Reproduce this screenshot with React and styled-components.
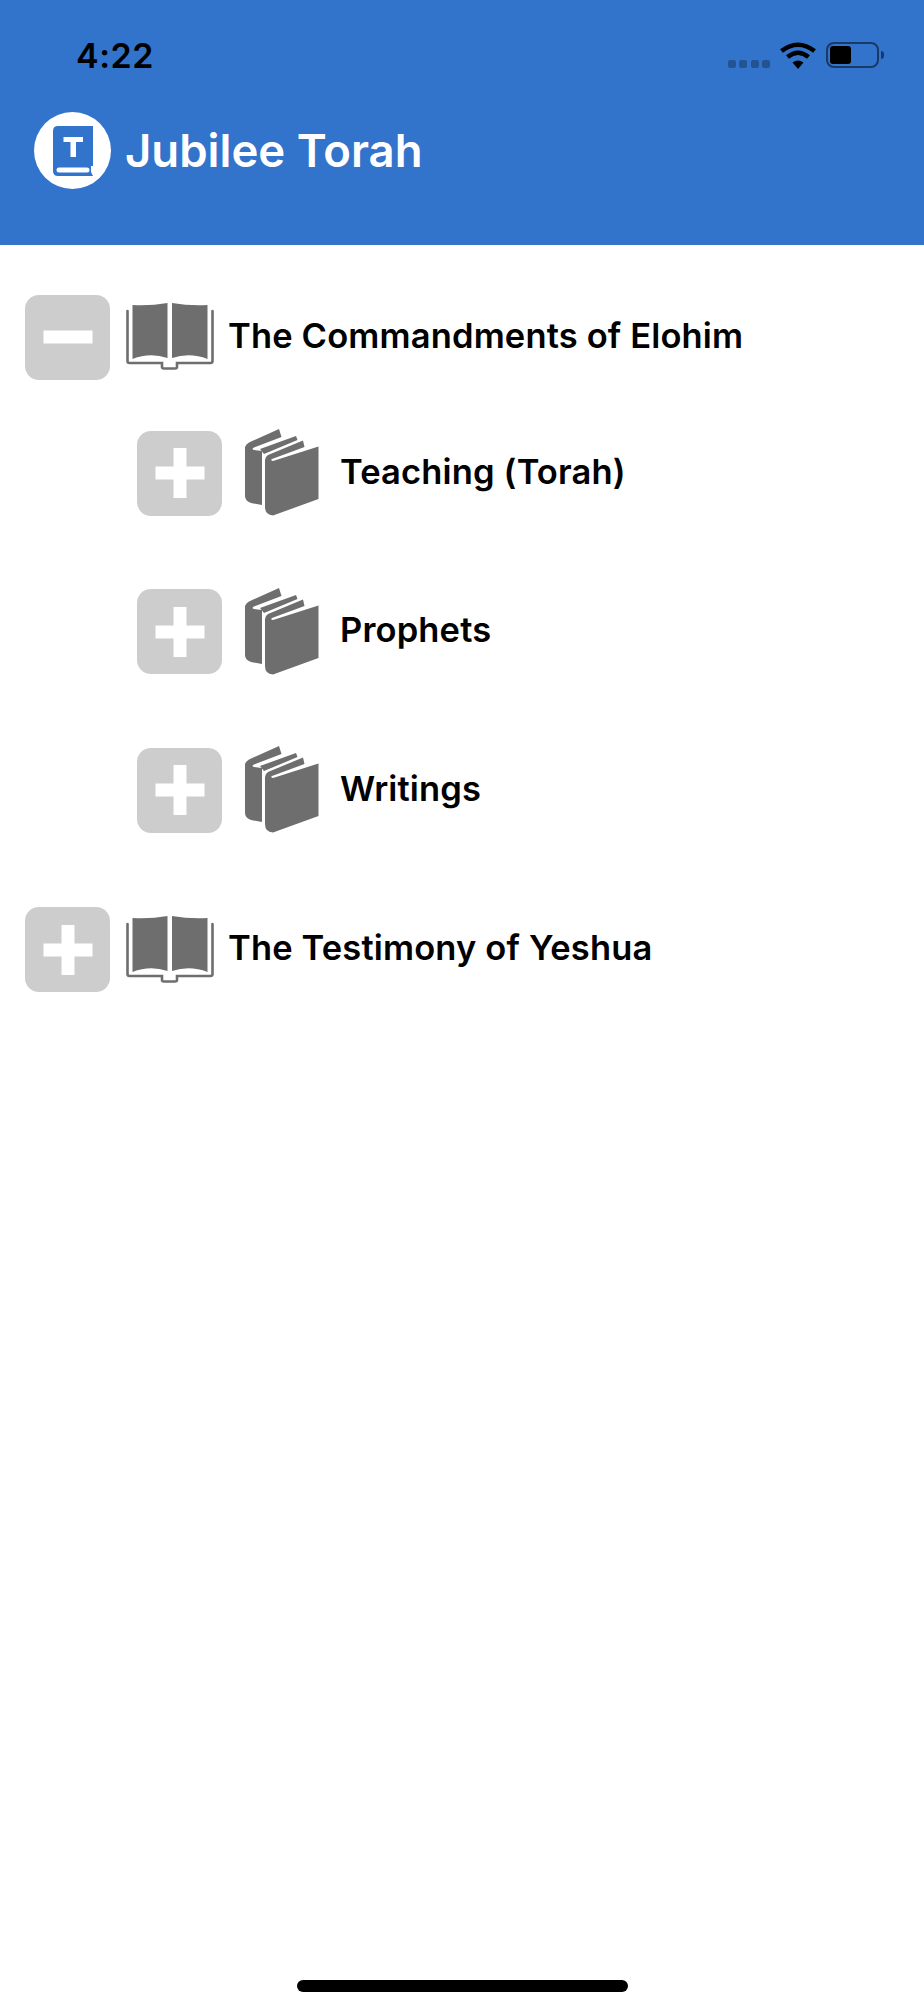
import React from "react";
import styled, { createGlobalStyle } from "styled-components";

const Global = createGlobalStyle`
  html, body { margin: 0; padding: 0; background: #fff; }
  body { font-family: Inter, "Noto Sans", "Liberation Sans", sans-serif; }
`;

const Page = styled.div`
  width: 924px;
  height: 2000px;
  display: flex;
  flex-direction: column;
  background: #fff;
  overflow: hidden;
`;

const Header = styled.header`
  height: 245px;
  flex: none;
  background: #3273cc;
  display: flex;
  flex-direction: column;
  box-sizing: border-box;
`;

const StatusBar = styled.div`
  height: 112px;
  flex: none;
  box-sizing: border-box;
  padding: 37px 40px 0 76px;
  display: flex;
  justify-content: space-between;
  align-items: flex-start;
`;

const Time = styled.div`
  font-size: 34px;
  line-height: 38px;
  font-weight: 600;
  letter-spacing: 0.5px;
  color: #000;
`;

const StatusIcons = styled.div`
  display: flex;
  align-items: flex-start;
  gap: 10px;
  padding-top: 5px;
`;

const Signal = styled.div`
  display: flex;
  gap: 3.5px;
  padding-top: 18px;
`;

const SignalDot = styled.span`
  width: 8px;
  height: 8px;
  border-radius: 2px;
  background: rgba(0, 0, 0, 0.28);
`;

const Battery = styled.div`
  display: flex;
  align-items: center;
  gap: 2px;
`;

const BatteryBody = styled.div`
  width: 53px;
  height: 26px;
  box-sizing: border-box;
  border: 2px solid rgba(0, 0, 0, 0.5);
  border-radius: 8px;
  padding: 2px;
  display: flex;
`;

const BatteryLevel = styled.div`
  width: 21px;
  background: #000;
  border-radius: 3px;
`;

const BatteryNub = styled.div`
  width: 3px;
  height: 8px;
  background: rgba(0, 0, 0, 0.5);
  border-radius: 0 3px 3px 0;
`;

const TitleBar = styled.div`
  display: flex;
  align-items: center;
  gap: 14px;
  padding-left: 34px;
`;

const Logo = styled.div`
  width: 77px;
  height: 77px;
  border-radius: 50%;
  background: #fff;
  display: flex;
  align-items: center;
  justify-content: center;
  flex: none;
`;

const Title = styled.h1`
  margin: 0;
  font-size: 45.5px;
  line-height: 54px;
  font-weight: 600;
  color: #fff;
`;

const Tree = styled.main`
  padding-top: 40px;
  display: flex;
  flex-direction: column;
`;

const TopRow = styled.div`
  height: 104px;
  display: flex;
  align-items: center;
  padding-left: 25px;
  margin-top: ${(p) => (p.$spaced ? "28px" : "0")};
`;

const Children = styled.div`
  margin-top: 5px;
  padding-left: 137px;
  display: flex;
  flex-direction: column;
`;

const ChildRow = styled.div`
  height: 158.5px;
  display: flex;
  align-items: center;
`;

const Toggle = styled.div`
  width: 85px;
  height: 85px;
  flex: none;
  border-radius: 14px;
  background: #cdcdcd;
  display: flex;
  align-items: center;
  justify-content: center;
  margin-right: ${(p) => p.$gap}px;
`;

const Label = styled.span`
  font-size: 34.5px;
  font-weight: 600;
  letter-spacing: 0.15px;
  color: #000;
  margin-left: ${(p) => p.$gap}px;
  padding-bottom: 4px;
  white-space: nowrap;
`;

const HomeBar = styled.div`
  width: 331px;
  height: 12px;
  border-radius: 6px;
  background: #000;
  margin: auto auto 8px 297px;
`;

const Sign = ({ plus }) => (
  <svg width="50" height="50" viewBox="0 0 50 50" aria-hidden="true">
    <rect x="0.5" y="18.5" width="49" height="13" fill="#fff" />
    {plus && <rect x="18.5" y="0" width="13" height="50" fill="#fff" />}
  </svg>
);

const OpenBook = () => (
  <svg width="88" height="70" viewBox="6 8 88 70" aria-hidden="true">
    <path d="M12.5 11 Q30 12 47.5 9 V64 Q30 58 12.5 65 Z" fill="#6e6e6e" />
    <path d="M52 9 Q70 12 87.5 11 V65 Q70 58 52 64 Z" fill="#6e6e6e" />
    <path
      d="M7.5 17 V67 Q7.5 69 9.5 69 H42 V73 Q42 74.5 44 74.5 H55 Q57 74.5 57 73 V69 H90.5 Q92.5 69 92.5 67 V17"
      fill="none"
      stroke="#6e6e6e"
      strokeWidth="2.6"
      strokeLinecap="round"
    />
  </svg>
);

const Books = () => (
  <svg width="77" height="88" viewBox="9 5 77 88" aria-hidden="true">
    <path
      d="M10 23 Q11 20 14 18.5 L44 5 L46.5 13 L19 23.5 Q16 25 19 26 L27 27 V81 L16 79 Q10 77 10 72 Z"
      fill="#6e6e6e"
    />
    <path d="M25 25 L61 12 L62.5 16 L29 30 Z" fill="#6e6e6e" />
    <path
      d="M30 36 Q30 33 33 31 L68 16.5 L69.5 23 L37 35 Q35 36.5 38 37 L83.5 22.5 V75 L38 91.5 Q30 91 30 83 Z"
      fill="#6e6e6e"
    />
  </svg>
);

const LogoMark = () => (
  <svg width="40" height="50" viewBox="0 0 40 50" aria-hidden="true">
    <path d="M5 0 H40 V40 H38 V46 L40 50 H5 Q0 50 0 45 V5 Q0 0 5 0 Z" fill="#3273cc" />
    <rect x="3.5" y="41.5" width="33" height="5" rx="2.5" fill="#fff" />
    <path d="M10.5 11 H30 V16 H23 V31 H17.5 V16 H10.5 Z" fill="#fff" />
  </svg>
);

const Wifi = () => (
  <svg width="36" height="27" viewBox="0 0 36 27" aria-hidden="true">
    <path d="M18 27 L12.5 20.5 Q18 16.5 23.5 20.5 Z" fill="#000" />
    <path d="M7.5 15 Q18 6.5 28.5 15" fill="none" stroke="#000" strokeWidth="4.6" />
    <path d="M1.5 9 Q18 -3.5 34.5 9" fill="none" stroke="#000" strokeWidth="4.6" />
  </svg>
);

export default function App() {
  return (
    <Page>
      <Global />
      <Header>
        <StatusBar>
          <Time>4:22</Time>
          <StatusIcons>
            <Signal>
              <SignalDot />
              <SignalDot />
              <SignalDot />
              <SignalDot />
            </Signal>
            <Wifi />
            <Battery>
              <BatteryBody>
                <BatteryLevel />
              </BatteryBody>
              <BatteryNub />
            </Battery>
          </StatusIcons>
        </StatusBar>
        <TitleBar>
          <Logo>
            <LogoMark />
          </Logo>
          <Title>Jubilee Torah</Title>
        </TitleBar>
      </Header>
      <Tree>
        <TopRow>
          <Toggle $gap={16}>
            <Sign />
          </Toggle>
          <OpenBook />
          <Label $gap={14}>The Commandments of Elohim</Label>
        </TopRow>
        <Children>
          {["Teaching (Torah)", "Prophets", "Writings"].map((t) => (
            <ChildRow key={t}>
              <Toggle $gap={22}>
                <Sign plus />
              </Toggle>
              <Books />
              <Label $gap={19}>{t}</Label>
            </ChildRow>
          ))}
        </Children>
        <TopRow $spaced>
          <Toggle $gap={16}>
            <Sign plus />
          </Toggle>
          <OpenBook />
          <Label $gap={14}>The Testimony of Yeshua</Label>
        </TopRow>
      </Tree>
      <HomeBar />
    </Page>
  );
}
